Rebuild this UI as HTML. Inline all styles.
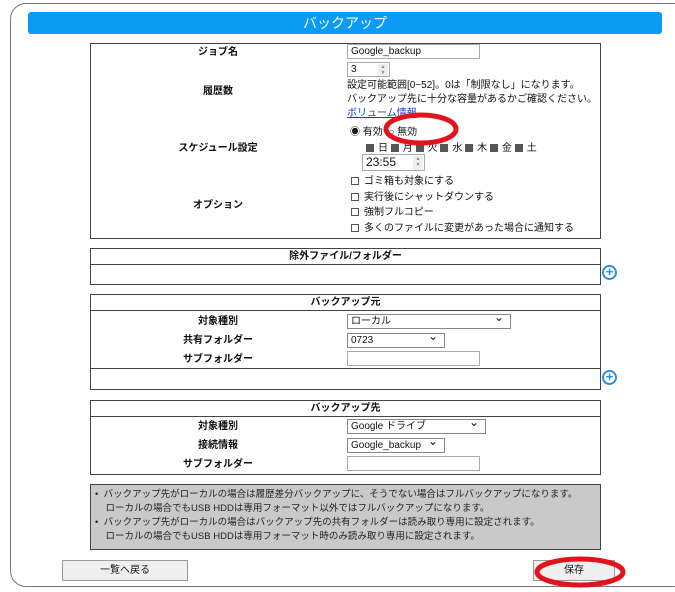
<!DOCTYPE html>
<html><head><meta charset="utf-8"><style>
*{box-sizing:border-box;margin:0;padding:0}
body{width:675px;height:592px;background:#fff;position:relative;overflow:hidden;font-family:"Liberation Sans","Noto Sans CJK JP",sans-serif;font-size:10px;color:#111}
.a{position:absolute}
.frame{left:10px;top:3px;width:680px;height:584px;border:1px solid #777;border-radius:16px}
.hdr{left:28px;top:12px;width:634px;height:22px;background:#0a9bf5;border-radius:3px;color:#fff;font-size:14px;text-align:center;line-height:22px}
.tb{border:1px solid #444;left:90px;width:511px}
.lb{font-weight:bold;text-align:center;width:256px;left:90px;font-size:10px}
.in{border:1px solid #aaa;background:#fff;height:15px;font-size:10px;line-height:13px;padding-left:3px}
.sel{border:1px solid #888;background:#fff;height:15px;line-height:13px;padding-left:3px}
.sel:after{content:"⌄";position:absolute;right:6px;top:-4px;font-size:12px}
.th{font-weight:bold;text-align:center;border-bottom:1px solid #444;height:16px;line-height:15px}
.cb{display:inline-block;width:8px;height:8px;border:1px solid #555;vertical-align:-1px;margin-right:5px;background:#fff}
.ck{display:inline-block;width:8px;height:8px;background:#555;vertical-align:-1px;margin-right:4px}
.plus{width:15px;height:15px;border:2px solid #2a8fe0;border-radius:50%;color:#2a8fe0;font-weight:bold;text-align:center;line-height:10px;font-size:13px}
.btn{border:1px solid #999;background:#efefef;text-align:center;line-height:19px;height:21px}
.spin{position:absolute;right:1px;top:1px;width:10px;height:12px;background:#eee;font-size:5px;line-height:6px;text-align:center;color:#888}
</style></head><body>
<div class="a frame"></div>
<div class="a hdr">バックアップ</div>

<div class="a tb" style="top:43px;height:196px"></div>
<div class="a lb" style="top:43px">ジョブ名</div>
<div class="a in" style="left:347px;top:44px;width:133px">Google_backup</div>
<div class="a in" style="left:347px;top:62px;width:43px">3<div class="spin">▲<br>▼</div></div>
<div class="a lb" style="top:82px">履歴数</div>
<div class="a" style="left:347px;top:79px;line-height:14px">設定可能範囲[0~52]。0は「制限なし」になります。<br>バックアップ先に十分な容量があるかご確認ください。<br><span style="color:#1a3fd0;text-decoration:underline">ボリューム情報</span></div>
<div class="a" style="left:350px;top:123px">◉ 有効 &nbsp;○ 無効</div>
<div class="a lb" style="top:139px">スケジュール設定</div>
<div class="a" style="left:366px;top:139px"><span class="ck"></span>日 <span class="ck"></span>月 <span class="ck"></span>火 <span class="ck"></span>水 <span class="ck"></span>木 <span class="ck"></span>金 <span class="ck"></span>土</div>
<div class="a in" style="left:362px;top:154px;width:63px;height:17px;font-size:12px;line-height:15px">23:55<div class="spin" style="height:14px">▲<br>▼</div></div>
<div class="a" style="left:351px;top:174px;line-height:15.7px"><span class="cb"></span>ゴミ箱も対象にする<br><span class="cb"></span>実行後にシャットダウンする<br><span class="cb"></span>強制フルコピー<br><span class="cb"></span>多くのファイルに変更があった場合に通知する</div>
<div class="a lb" style="top:196px">オプション</div>
<svg class="a" style="left:375px;top:108px" width="95" height="45"><ellipse cx="46" cy="21" rx="35" ry="14" fill="none" stroke="#e3121c" stroke-width="5"/></svg>

<div class="a tb" style="top:248px;height:37px"><div class="th">除外ファイル/フォルダー</div></div>
<div class="a plus" style="left:602px;top:265px">+</div>

<div class="a tb" style="top:294px;height:96px"><div class="th">バックアップ元</div><div style="position:absolute;left:0;right:0;top:73px;border-top:1px solid #444"></div></div>
<div class="a lb" style="top:312px">対象種別</div>
<div class="a lb" style="top:331px">共有フォルダー</div>
<div class="a lb" style="top:350px">サブフォルダー</div>
<div class="a sel" style="left:347px;top:314px;width:164px">ローカル</div>
<div class="a sel" style="left:347px;top:333px;width:98px">0723</div>
<div class="a in" style="left:347px;top:351px;width:133px"></div>
<div class="a plus" style="left:602px;top:370px">+</div>

<div class="a tb" style="top:400px;height:75px"><div class="th">バックアップ先</div></div>
<div class="a lb" style="top:417px">対象種別</div>
<div class="a lb" style="top:436px">接続情報</div>
<div class="a lb" style="top:455px">サブフォルダー</div>
<div class="a sel" style="left:347px;top:419px;width:139px">Google ドライブ</div>
<div class="a sel" style="left:347px;top:438px;width:98px">Google_backup</div>
<div class="a in" style="left:347px;top:456px;width:133px"></div>

<div class="a" style="left:90px;top:484px;width:511px;height:66px;background:#c9c9c9;border:1px solid #444;padding:3px 0 0 4px;line-height:14px;font-size:9.5px;color:#222">• &nbsp;バックアップ先がローカルの場合は履歴差分バックアップに、そうでない場合はフルバックアップになります。<br>&nbsp;&nbsp;&nbsp;&nbsp;ローカルの場合でもUSB HDDは専用フォーマット以外ではフルバックアップになります。<br>• &nbsp;バックアップ先がローカルの場合はバックアップ先の共有フォルダーは読み取り専用に設定されます。<br>&nbsp;&nbsp;&nbsp;&nbsp;ローカルの場合でもUSB HDDは専用フォーマット時のみ読み取り専用に設定されます。</div>

<div class="a btn" style="left:62px;top:560px;width:126px">一覧へ戻る</div>
<div class="a btn" style="left:533px;top:560px;width:82px">保存</div>
<svg class="a" style="left:530px;top:553px" width="100" height="38"><ellipse cx="50" cy="19" rx="43" ry="13" fill="none" stroke="#e3121c" stroke-width="5"/></svg>
</body></html>
